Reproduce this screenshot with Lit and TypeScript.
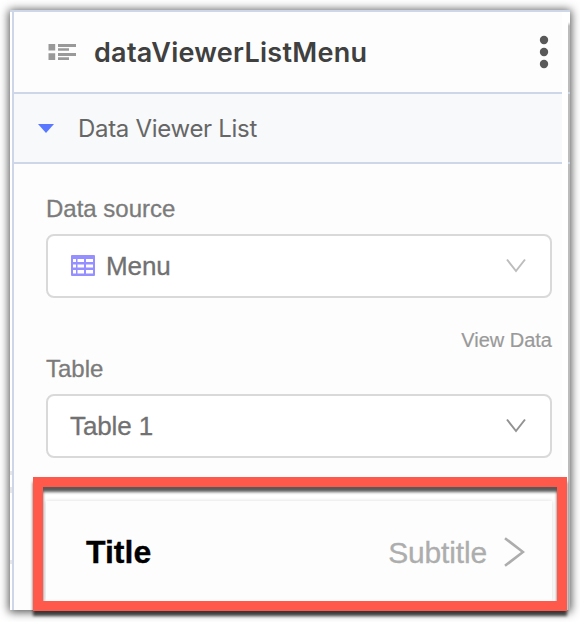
import { LitElement, html, css, svg } from "lit";
import { customElement, property } from "lit/decorators.js";

const chevronDown = svg`<path d="M1 1.5 L10 13 L19 1.5" fill="none" stroke="currentColor" stroke-width="2"/>`;

@customElement("select-field")
class SelectField extends LitElement {
  @property() label = "";
  @property() value = "";
  @property({ type: Boolean }) sheet = false;
  @property({ type: Boolean }) strong = false;

  static styles = css`
    :host { display: block; }
    .label { height: 30px; line-height: 30px; font-size: 24px; color: #7b7b7b; -webkit-text-stroke: 0.3px #7b7b7b; }
    .box {
      box-sizing: border-box; height: 64px; margin-top: 10px; padding: 0 24px 0 22px;
      display: flex; align-items: center; background: #fff;
      border: 2px solid #d9d9d9; border-radius: 8px;
    }
    .sheet { margin: -1px 11px 0 1px; display: block; }
    .value { flex: 1; font-size: 26px; line-height: 30px; color: #717171; -webkit-text-stroke: 0.3px #717171; letter-spacing: -0.1px; }
    .chevron { color: #bdbdbd; display: block; margin-top: -1px; }
    .chevron.strong { color: #929292; }
  `;

  render() {
    return html`
      <div class="label">${this.label}</div>
      <div class="box">
        ${this.sheet
          ? html`<svg class="sheet" width="24" height="21" viewBox="0 0 24 21">
              <rect width="24" height="21" rx="1" fill="#958fff" />
              <path fill="#fff" d="M2 4h3v3H2zM6.5 4h6.5v3H6.5zM15 4h7v3h-7zM2 9.5h3v3H2zM6.5 9.5h6.5v3H6.5zM15 9.5h7v3h-7zM2 15h3v3.5H2zM6.5 15h6.5v3.5H6.5zM15 15h7v3.5h-7z" />
            </svg>`
          : ""}
        <span class="value">${this.value}</span>
        <svg class="chevron ${this.strong ? "strong" : ""}" width="20" height="15" viewBox="0 0 20 15">${chevronDown}</svg>
      </div>
    `;
  }
}

@customElement("app-root")
class AppRoot extends LitElement {
  static styles = css`
    :host {
      display: block; box-sizing: border-box; width: 580px; height: 622px; padding: 10px;
      position: relative; overflow: hidden; background: #fff;
      font-family: "Liberation Sans", Arial, sans-serif;
    }
    * { box-sizing: border-box; }
    .panel {
      width: 560px; height: 600px; background: #fdfdfd;
      border-top: 2px solid #ced7e7;
      box-shadow: 0 1px 9px 1px rgba(0, 0, 0, 0.7);
      display: flex;
    }
    .rail {
      width: 4px; border-right: 2px solid #ced7e7;
      background:
        linear-gradient(#e6e6ea, #e6e6ea) 0 459px / 2px 4px no-repeat,
        linear-gradient(#e6e6ea, #e6e6ea) 0 475px / 2px 6px no-repeat,
        linear-gradient(#e6e6ea, #e6e6ea) 0 548px / 2px 4px no-repeat,
        #fff;
    }
    .content { width: 548px; }
    .gutter { flex: 1; background: #fff; }
    .edge {
      width: 2px;
      background: linear-gradient(
        #fff 10px, #bcbcbc 14px, #bcbcbc 80px, #ced7e7 80px, #ced7e7 82px,
        #bcbcbc 82px, #bcbcbc 150px, #ced7e7 150px, #ced7e7 152px, #bcbcbc 152px
      );
    }
    .header {
      height: 82px; padding: 0 12px 0 34px; display: flex; align-items: center;
      border-bottom: 2px solid #ced7e7;
    }
    .name {
      flex: 1; margin: 2px 0 0 18px; font: 600 27px/36px Inter, sans-serif;
      letter-spacing: 0.27px; color: #404040; white-space: nowrap;
    }
    .section {
      height: 70px; padding-left: 24px; display: flex; align-items: center;
      background: #f8f9fb; border-bottom: 2px solid #ced7e7;
    }
    .section-name {
      margin: 2px 0 0 24px; font: 400 24px/32px Inter, sans-serif;
      letter-spacing: -0.3px; color: #666; white-space: nowrap;
    }
    .fields { padding: 30px 10px 0 32px; }
    .link { height: 24px; margin-top: 30px; text-align: right; font-size: 20px; line-height: 24px; color: #999; -webkit-text-stroke: 0.2px #999; }
    .second { margin-top: 2px; }
    svg { display: block; flex: none; }
    .frame {
      position: absolute; left: 33px; top: 477px; width: 534px; height: 134px;
      background: #fff; display: flex; padding: 24px 15px 10px 13px;
    }
    .frame::after {
      content: ""; position: absolute; inset: 0; border: 10px solid #ff594b;
      filter: drop-shadow(0 5px 1.5px rgba(0, 0, 0, 0.65));
    }
    .card {
      flex: 1; display: flex; align-items: center; padding: 3px 27px 0 40px;
      background: #fdfdfd; box-shadow: 0 0 4px rgba(0, 0, 0, 0.15);
    }
    .title { flex: 1; font-size: 32px; font-weight: 700; color: #000; -webkit-text-stroke: 0.3px #000; }
    .subtitle { font-size: 30px; color: #adadad; margin-right: 17px; letter-spacing: -0.15px; -webkit-text-stroke: 0.3px #adadad; }
    .next { margin-top: -2px; }
  `;

  render() {
    return html`
      <div class="panel">
        <div class="rail"></div>
        <div class="content">
          <div class="header">
            <svg width="28" height="16" viewBox="0 0 28 16">
              <path fill="#999" d="M0.5 0h6.7v6.5H0.5zM0.5 9.3h6.7v6.7H0.5zM10 0h18v3H10zM10 4.2h11v2.5H10zM10 9h18v3H10zM10 13.3h11v2.7H10z" />
            </svg>
            <span class="name">dataViewerListMenu</span>
            <svg width="12" height="34" viewBox="0 0 12 34" fill="#595959">
              <circle cx="6" cy="5" r="4.2" /><circle cx="6" cy="17" r="4.2" /><circle cx="6" cy="29" r="4.2" />
            </svg>
          </div>
          <div class="section">
            <svg width="16" height="9" viewBox="0 0 16 9"><path d="M0 0h16L8 9z" fill="#5978ff" /></svg>
            <span class="section-name">Data Viewer List</span>
          </div>
          <div class="fields">
            <select-field label="Data source" value="Menu" sheet></select-field>
            <div class="link">View Data</div>
            <select-field class="second" label="Table" value="Table 1" strong></select-field>
          </div>
        </div>
        <div class="gutter"></div>
        <div class="edge"></div>
      </div>
      <div class="frame">
        <div class="card">
          <span class="title">Title</span>
          <span class="subtitle">Subtitle</span>
          <svg class="next" width="21" height="30" viewBox="0 0 21 30"><path d="M1 1.2L19 15L1 28.8" fill="none" stroke="#adadad" stroke-width="2.6" /></svg>
        </div>
      </div>
    `;
  }
}
